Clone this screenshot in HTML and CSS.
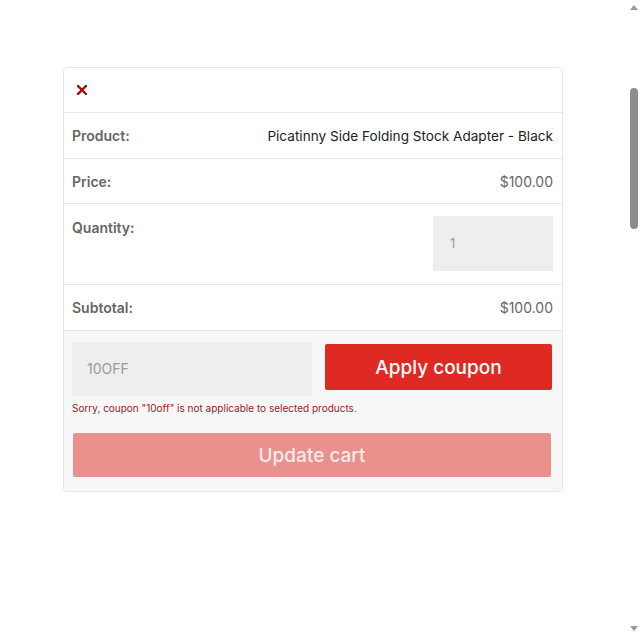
FILE: index.html
```html
<!DOCTYPE html>
<html lang="en">
<head>
  <meta charset="UTF-8">
  <meta name="viewport" content="width=device-width, initial-scale=1.0">
  <title>Cart</title>
  <link rel="stylesheet" href="styles.css">
</head>
<body>
  <div class="page">
    <div class="cart">
      <div class="cart-row remove-row">
        <svg class="remove" width="10" height="10" viewBox="0 0 10 10">
          <path d="M1 1 L9 9 M9 1 L1 9" stroke="#a50d0d" stroke-width="2.4" stroke-linecap="square"/>
        </svg>
      </div>

      <div class="cart-row">
        <div class="label">Product:</div>
        <div class="value value-dark">Picatinny Side Folding Stock Adapter - Black</div>
      </div>

      <div class="cart-row price-row">
        <div class="label">Price:</div>
        <div class="value">$100.00</div>
      </div>

      <div class="cart-row qty-row">
        <div class="label">Quantity:</div>
        <div class="qty-input">1</div>
      </div>

      <div class="cart-row">
        <div class="label">Subtotal:</div>
        <div class="value">$100.00</div>
      </div>

      <div class="cart-actions">
        <div class="coupon">
          <div class="coupon-input">10OFF</div>
          <button class="btn btn-apply">Apply coupon</button>
        </div>
        <div class="coupon-error">Sorry, coupon "10off" is not applicable to selected products.</div>
        <button class="btn btn-update">Update cart</button>
      </div>
    </div>
  </div>

  <!-- browser scrollbar -->
  <div class="scrollbar">
    <div class="arrow arrow-up"></div>
    <div class="track">
      <div class="thumb"></div>
    </div>
    <div class="arrow arrow-down"></div>
  </div>
</body>
</html>
```

FILE: styles.css
```css
* {
  margin: 0;
  padding: 0;
  box-sizing: border-box;
}

html, body {
  height: 100%;
  overflow: hidden;
}

body {
  display: flex;
  font-family: Inter, "Noto Sans", sans-serif;
  background: #fff;
  color: #222;
}

.page {
  flex: 1;
  padding: 67px 0 0 63px;
}

.cart {
  width: 500px;
  border: 1px solid #e6e6e6;
  border-radius: 4px;
  overflow: hidden;
}

.cart-row {
  display: flex;
  align-items: center;
  justify-content: space-between;
  height: 46px;
  padding: 0 9px 0 8px;
  border-bottom: 1px solid #e6e6e6;
}

.remove-row {
  height: 45px;
  padding-left: 13px;
}

.remove {
  display: block;
}

.price-row {
  height: 45px;
}

.label {
  font-size: 14px;
  font-weight: 600;
  color: #666;
}

.value {
  font-size: 14px;
  color: #666;
}

.value-dark {
  font-size: 13.6px;
  color: #222;
}

.qty-row {
  height: 81px;
  align-items: flex-start;
  padding-top: 12px;
}

.qty-row .label {
  margin-top: 3px;
}

.qty-input {
  width: 120px;
  height: 55px;
  background: #eee;
  color: #999;
  font-size: 13px;
  line-height: 55px;
  padding-left: 17px;
}

.cart-actions {
  background: #f7f7f8;
  padding: 11px 10px 14px 8px;
}

.coupon {
  display: flex;
  align-items: flex-start;
  justify-content: space-between;
}

.coupon-input {
  width: 240px;
  height: 54px;
  background: #eee;
  color: #999;
  font-size: 14px;
  line-height: 54px;
  padding-left: 15px;
}

.btn {
  border: none;
  border-radius: 2px;
  font-family: inherit;
  font-size: 19px;
  font-weight: 500;
  color: #fff;
  cursor: pointer;
}

.btn-apply {
  width: 227px;
  height: 46px;
  margin-top: 2px;
  background: #de2a22;
}

.coupon-error {
  font-size: 10px;
  color: #9a1b1b;
  margin-top: 6px;
}

.btn-update {
  display: block;
  width: 478px;
  height: 44px;
  margin: 19px 0 0 1px;
  background: #e8918d;
  color: #fbeaea;
}

.scrollbar {
  width: 14px;
  display: flex;
  flex-direction: column;
  align-items: center;
  padding: 5px 0 5px 2px;
}

.arrow {
  width: 0;
  height: 0;
  border-left: 4px solid transparent;
  border-right: 4px solid transparent;
}

.arrow-up {
  border-bottom: 5px solid #999;
}

.arrow-down {
  border-top: 5px solid #999;
}

.track {
  flex: 1;
  width: 100%;
  display: flex;
  justify-content: center;
  padding-top: 78px;
}

.thumb {
  width: 8px;
  height: 141px;
  border-radius: 4px;
  background: #8c8c8c;
}
```
